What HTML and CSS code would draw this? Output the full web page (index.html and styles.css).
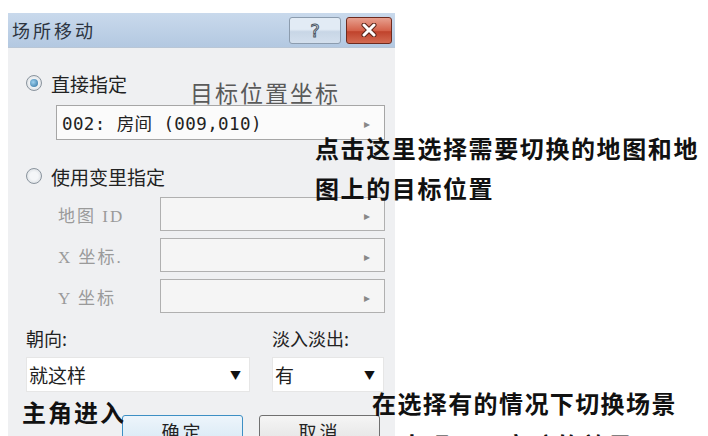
FILE: index.html
```html
<!DOCTYPE html>
<html lang="zh">
  <head>
    <meta charset="UTF-8" />
    <title>场所移动</title>
    <link rel="stylesheet" href="styles.css">
  </head>
  <body>
    <div class="page">
      <!-- ダイアログ本体 -->
      <div class="dialog">
        <div class="titlebar">
          <span class="title">场所移动</span>
          <div class="caption-btns">
            <span class="cap-btn help">?</span>
            <span class="cap-btn close">
              <svg width="16" height="14" viewBox="0 0 16 14">
                <path d="M3 2 L13 12 M13 2 L3 12" stroke="#5a2418" stroke-width="5" stroke-linecap="round" />
                <path d="M3 2 L13 12 M13 2 L3 12" stroke="#fff" stroke-width="3" stroke-linecap="round" />
              </svg>
            </span>
          </div>
        </div>

        <div class="body">
          <div class="radio-row first"><span class="radio on"></span>直接指定</div>
          <div class="field direct">
            <span class="mono">002: 房间 (009,010)</span>
            <span class="tri">▸</span>
          </div>

          <div class="radio-row second"><span class="radio"></span>使用变里指定</div>
          <div class="var-row">
            <span class="var-label">地图 ID</span>
            <div class="field disabled"><span class="tri">▸</span></div>
          </div>
          <div class="var-row">
            <span class="var-label">X 坐标.</span>
            <div class="field disabled"><span class="tri">▸</span></div>
          </div>
          <div class="var-row">
            <span class="var-label">Y 坐标</span>
            <div class="field disabled"><span class="tri">▸</span></div>
          </div>

          <div class="combo-row">
            <div class="combo-col dir">
              <div class="combo-label">朝向:</div>
              <div class="combo">就这样<span class="caret">▼</span></div>
            </div>
            <div class="combo-col fade">
              <div class="combo-label">淡入淡出:</div>
              <div class="combo">有<span class="caret">▼</span></div>
            </div>
          </div>

          <div class="btn-row">
            <button class="btn default">确定</button>
            <button class="btn">取消</button>
          </div>
        </div>
      </div>

      <!-- 注釈 -->
      <div class="note target">目标位置坐标</div>
      <div class="note click">点击这里选择需要切换的地图和地<br />图上的目标位置</div>
      <div class="note enter">主角进入</div>
      <div class="note fade-note">在选择有的情况下切换场景</div>
      <div class="note dim"><span class="mark">▲</span>出现画面变暗的效果</div>
    </div>
  </body>
</html>
```

FILE: styles.css
```css
body {
  margin: 0;
  background-color: #fff;
  font-family: "Noto Sans CJK SC", "Noto Sans", sans-serif;
  color: #222;
}

.page {
  position: relative;
  width: 708px;
  height: 436px;
  overflow: hidden;
}

.dialog {
  margin: 13px 0 0 8px;
  width: 387px;
  height: 423px;
  background-color: #eff0f2;
}

.titlebar {
  height: 34px;
  display: flex;
  align-items: center;
  justify-content: space-between;
  background: linear-gradient(#c9d9ec, #b3c8e1);
  border-bottom: 1px solid #b8c6d6;
}

.title {
  padding-left: 4px;
  font-size: 18px;
  color: #2c3440;
  letter-spacing: 3px;
}

.caption-btns {
  display: flex;
  gap: 5px;
  padding-right: 3px;
}

.cap-btn {
  height: 25px;
  display: flex;
  align-items: center;
  justify-content: center;
  border-radius: 3px;
}

.help {
  width: 50px;
  border: 1px solid #8c9cae;
  background: linear-gradient(#e2ebf5 45%, #c8d6e6 55%, #d3dfed);
  font-family: "DejaVu Sans", sans-serif;
  font-size: 18px;
  color: #fff;
  -webkit-text-stroke: 1px #4a5666;
}

.close {
  width: 44px;
  border: 1px solid #6e2a1e;
  background: linear-gradient(#e7a08f, #d4624b 50%, #c0432c 55%, #d36a52);
}

.body {
  padding: 24px 10px 0 18px;
}

.radio-row {
  height: 22px;
  display: flex;
  align-items: center;
  gap: 9px;
  font-size: 19px;
  color: #222;
}

.radio {
  width: 14px;
  height: 14px;
  border-radius: 50%;
  border: 1px solid #8a949e;
  background: radial-gradient(circle, #f4f6f8 40%, #cfd4d9);
  display: flex;
  align-items: center;
  justify-content: center;
}

.radio.on::after {
  content: "";
  width: 8px;
  height: 8px;
  border-radius: 50%;
  background: radial-gradient(circle at 40% 40%, #9fd2f0, #2a6d9c);
}

.radio-row.second {
  margin-top: 25px;
}

.field {
  height: 33px;
  border: 1px solid #a6a6a6;
  background-color: #fbfbfb;
  display: flex;
  align-items: center;
  justify-content: space-between;
  padding: 0 14px 0 5px;
}

.field.direct {
  margin: 11px 0 0 30px;
}

.mono {
  font-family: "DejaVu Sans Mono", "Noto Sans CJK SC", monospace;
  font-size: 17.5px;
  color: #222;
  letter-spacing: 0.4px;
}

.tri {
  font-size: 12px;
  color: #888;
  margin-left: auto;
}

.var-row {
  display: flex;
  align-items: center;
  margin-top: 7px;
}

.radio-row.second + .var-row {
  margin-top: 10px;
}

.var-label {
  width: 102px;
  padding-left: 32px;
  font-family: "Liberation Serif", "Noto Sans CJK SC", serif;
  font-size: 17px;
  color: #9a9a9a;
  letter-spacing: 2px;
}

.var-row .field {
  flex: 1;
  height: 32px;
  background-color: #f5f5f5;
  border-color: #b0b0b0;
}

.combo-row {
  display: flex;
  margin-top: 14px;
  gap: 22px;
}

.combo-label {
  font-size: 18px;
  height: 22px;
  line-height: 22px;
  color: #222;
}

.combo-col.dir {
  width: 224px;
}

.combo-col.fade {
  width: 112px;
}

.combo {
  margin-top: 8px;
  height: 33px;
  border: 1px solid #e6e6e6;
  background-color: #fff;
  display: flex;
  align-items: center;
  padding: 0 8px 0 2px;
  font-size: 19px;
}

.caret {
  margin-left: auto;
  font-size: 11px;
  color: #111;
}

.btn-row {
  display: flex;
  gap: 16px;
  margin: 23px 0 0 96px;
}

.btn {
  width: 121px;
  height: 32px;
  border-radius: 3px;
  border: 1px solid #707070;
  background: linear-gradient(#f5f5f5, #e2e2e2);
  font-family: "Noto Sans CJK SC", sans-serif;
  font-size: 18px;
  color: #222;
  padding: 0;
  letter-spacing: 3px;
}

.btn.default {
  border-color: #3d8fc4;
  background: linear-gradient(#edf5fb, #d6e7f4);
}

/* 注釈テキスト */
.note {
  position: absolute;
  white-space: nowrap;
  font-weight: 700;
  color: #111;
  font-size: 24px;
  letter-spacing: 2px;
}

.note.target {
  left: 190px;
  top: 75px;
  font-weight: 400;
  font-size: 23px;
  letter-spacing: 2px;
  color: #5a5a5a;
}

.note.click {
  left: 315px;
  top: 128px;
  line-height: 40px;
  letter-spacing: 1.6px;
}

.note.enter {
  left: 22px;
  top: 394px;
  letter-spacing: 2px;
}

.note.fade-note {
  left: 372px;
  top: 385px;
  letter-spacing: 1.4px;
}

.note.dim {
  left: 378px;
  top: 427px;
  letter-spacing: 2px;
}

.note.dim .mark {
  font-size: 14px;
  margin-right: 6px;
}
```
